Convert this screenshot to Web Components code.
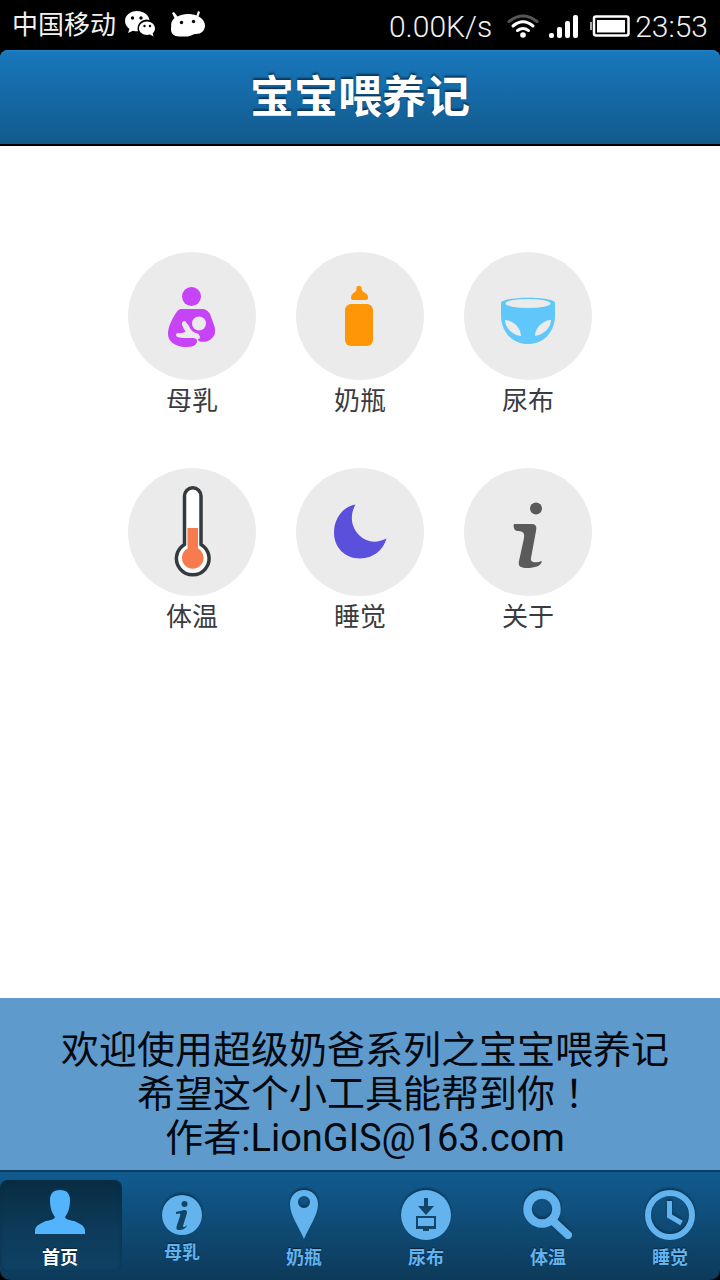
<!DOCTYPE html>
<html lang="zh-CN">
<head>
<meta charset="utf-8">
<meta name="viewport" content="width=device-width, initial-scale=1">
<title>宝宝喂养记</title>
<style>
  html { background: #000; }
  body { margin: 0; font-family: Roboto, "Noto Sans CJK SC", sans-serif; }
</style>
</head>
<body>
<feeding-app></feeding-app>

<script>
const ICONS = {
  wechat: ['0 0 32 30', `<path fill="#fff" d="M13 1C6 1 1 5.500 1 11c0 3.300 1.800 6 4.500 8L4 23l5-2.300c1.600.500 3.300.700 5 .500A9 9 0 0 1 25.500 10C24.500 4.500 19.500 1 13 1z"/><circle cx="8.500" cy="8" r="1.700"/><circle cx="17" cy="8" r="1.700"/><path fill="#fff" d="M23 11.500c-4.500 0-8 3-8 6.800s3.500 6.700 8 6.700c1 0 2-.200 3-.500l3.500 2-.800-3.300c1.500-1.200 2.300-3 2.300-4.900 0-3.800-3.500-6.800-8-6.800z"/><circle cx="20.500" cy="16" r="1.200"/><circle cx="26" cy="16" r="1.200"/>`],
  droid: ['0 0 36 30', `<path fill="#fff" d="M2 3l2-1 3.500 4.500c3-1.500 6-2.500 10.500-2.500 3 0 6 .500 8.500 1.500L28 1l2 1-1.500 4.500C32.500 8.500 35 12 35 15.500c0 5-4 8.500-9 8.500-3 0-4 1.500-8 2.500H9c-5 0-8-3-8-7 0-2 .200-3 .200-5C1.200 12 2.500 10 4.500 8z"/><circle cx="11.500" cy="12.500" r="1.700"/><circle cx="23.500" cy="11.500" r="1.700"/>`],
  wifi: ['0 0 32 26', `<g fill="none" stroke="#fff" stroke-linecap="round"><path stroke="#555" stroke-width="3" d="M2 8.500Q16-2.500 30 8.500"/><path stroke-width="3" d="M6 13Q16 4.500 26 13"/><path stroke-width="3" d="M10.500 17.500Q16 13.500 21.500 17.500"/></g><circle cx="16" cy="22" r="2.800" fill="#fff"/>`],
  signal: ['0 0 30 24', `<g fill="#fff"><rect x="0" y="18" width="5" height="5" rx="2"/><rect x="8" y="12" width="5" height="11" rx="2"/><rect x="16" y="6" width="5" height="17" rx="2"/><rect x="24" y="0" width="5" height="23" rx="2"/></g>`],
  battery: ['0 0 40 22', `<rect x="0" y="7" width="2" height="8" fill="#aaa"/><rect x="4" y="1.500" width="34.500" height="19" rx="2" fill="none" stroke="#fff" stroke-width="2.500"/><rect x="7" y="5" width="28" height="12.500" fill="#fff"/>`],

  nursing: ['0 0 128 128', `<circle cx="63.500" cy="44.500" r="9.500" fill="#c643f6"/><path fill="#c643f6" d="M53 57h21c4 0 6 2 8 5l4 11c3 8 0 13-6 16-4 1.500-9 1-10-1-1-3 0-5 1-6-5-1-8-3-10-8l-4-5c-2 0-3 1-3 3l4 8c-3 1-7 1-9 4 2 2 6 2 10 2h6c4 0 5 3 3 6-2 3-8 3-12 3-10-1-16-6-16-13 0-7 4-15 8-21 2-3 3-4 5-4z"/><circle cx="71" cy="71.500" r="7" fill="#ebebeb"/><path d="M56 72q2 9 14 13M50 83q7 1 11-3" fill="none" stroke="#ebebeb" stroke-width="4" stroke-linecap="round"/>`],
  bottle: ['0 0 128 128', `<g fill="#ff9608"><path d="M60.500 36c0-3 5-3 5 0 0 4 3 4 5 6 2 2 2 6 0 6h-14c-2 0-2-4 0-6 2-2 4-2 4-6z"/><rect x="49" y="52" width="28" height="42" rx="6"/></g>`],
  diaper: ['0 0 128 128', `<path d="M37 51c0-7 54-7 54 0v14c-1 17-13 27-27 27S38 82 37 65z" fill="#60c7fa"/><ellipse cx="64" cy="51.500" rx="22.500" ry="4.500" fill="#ebebeb"/><path d="M41 68c7 0 16 7 16 16-8-1-16-8-16-16zM87 68c-7 0-16 7-16 16 8-1 16-8 16-16z" fill="#ebebeb"/>`],
  thermometer: ['0 0 128 128', `<path d="M56.500 28a8.250 8.250 0 0 1 16.500 0v48.500a16.300 16.300 0 1 1-16.500 0z" fill="#fff" stroke="#343a3e" stroke-width="3.500"/><path d="M59.500 60h10.500v20.500a10.800 10.800 0 1 1-10.500 0z" fill="#f77b4e"/>`],
  moon: ['0 0 128 128', `<path d="M59.500 36.500c-7 13-3 24 4 31 7 7 17 8 27 3-3 11-13 20-26.500 20-15 0-26-11-26-26 0-14 9-26 21.500-28z" fill="#5b50dc"/>`],
  about: ['0 0 128 128', `<circle cx="72" cy="40.500" r="6" fill="#5a5a5a"/><path d="M50 56h18c4 0 5 3 4 7l-5 27c-1 5 5 5 11 3-1 5-7 7-15 7-7 0-9-2-8-7l5-23c1-6-2-7-7-7-3-1-4-4-3-7z" fill="#5a5a5a"/>`],

  home: ['0 0 50 50', `<path fill="currentColor" d="M25 0c-7 0-10 4-10 10 0 8 2 13 5 17-1 3-5 3-9 4-7 3-11 5-11 10v3h50v-3c0-5-4-7-11-10-4-1-8-1-9-4 3-4 5-9 5-17 0-6-3-10-10-10z"/>`],
  info: ['0 0 40 40', `<circle cx="20" cy="20" r="20" fill="currentColor"/><g fill="#124668"><circle cx="22.500" cy="9" r="3"/><path d="M14 17l8-2c3 0 3 1 3 3l-4 13c0 2 2 1 4-1-1 4-5 5-8 5-3 0-3-2-2-5l3-9c1-3 0-3-4-2z"/></g>`],
  pin: ['0 0 50 50', `<path fill="currentColor" fill-rule="evenodd" d="M25 0c8 0 14 6 14 14 0 11-8 21-14 35-6-14-14-24-14-35C11 6 17 0 25 0zm0 6a6 6 0 1 0 0 12 6 6 0 0 0 0-12z"/>`],
  download: ['0 0 50 50', `<circle cx="25" cy="25" r="25" fill="currentColor"/><path fill="#124668" fill-rule="evenodd" d="M23 8h4v8h6l-8 9-8-9h6zM15 26h20v13h-7v2h-6v-2h-7zM17 28v8h16v-8z"/>`],
  search: ['0 0 50 50', `<g fill="none" stroke="currentColor"><circle cx="19" cy="19" r="14.500" stroke-width="8.500"/><path d="M30 31L45 45" stroke-width="8" stroke-linecap="round"/></g>`],
  clock: ['0 0 50 50', `<g fill="none" stroke="currentColor"><circle cx="25" cy="25" r="22" stroke-width="6"/><path d="M24.500 11v15l12 7" stroke-width="5"/></g>`]
};

function mount(host, html) {
  const template = document.createElement('template');
  template.innerHTML = html;
  host.attachShadow({ mode: 'open' }).append(template.content.cloneNode(true));
}

customElements.define('app-icon', class extends HTMLElement {
  connectedCallback() {
    if (this.shadowRoot) return;
    const [box, shapes] = ICONS[this.getAttribute('name')];
    mount(this, `<style>
      :host { display: block; flex: none; }
      svg { display: block; width: 100%; height: 100%; overflow: visible; }
    </style><svg viewBox="${box}" aria-hidden="true">${shapes}</svg>`);
  }
});

customElements.define('status-bar', class extends HTMLElement {
  connectedCallback() {
    if (this.shadowRoot) return;
    mount(this, `<style>
      :host { display: flex; justify-content: space-between; align-items: center; height: 50px;
        padding: 0 12px; background: #000; color: #f2f2f2; line-height: 36px; }
      div { display: flex; align-items: center; }
      .carrier { font-size: 26px; margin-right: 8px; }
      .num { font-size: 30px; font-weight: 300; padding-top: 4px; }
      .wechat { width: 32px; height: 30px; margin-right: 14px; }
      .droid { width: 36px; height: 30px; }
      .wifi { width: 32px; height: 26px; margin: 2px 10px 0 15px; }
      .signal { width: 30px; height: 24px; margin: 4px 11px 0 0; }
      .battery { width: 40px; height: 22px; margin: 2px 5px 0 0; }
    </style>
    <div><span class="carrier">中国移动</span><app-icon class="wechat" name="wechat"></app-icon><app-icon class="droid" name="droid"></app-icon></div>
    <div><span class="num">0.00K/s</span><app-icon class="wifi" name="wifi"></app-icon><app-icon class="signal" name="signal"></app-icon><app-icon class="battery" name="battery"></app-icon><span class="num">23:53</span></div>`);
  }
});

customElements.define('app-header', class extends HTMLElement {
  connectedCallback() {
    if (this.shadowRoot) return;
    mount(this, `<style>
      :host { display: block; background: #000; }
      header { border-radius: 8px 8px 0 0; border-bottom: 2px solid #000; padding: 16px 0 14px;
        background: linear-gradient(#1878bd, #125a8c); box-shadow: inset 0 2px #1b7fc6; }
      h1 { margin: 0; font-size: 44px; line-height: 64px; font-weight: 700; text-align: center;
        color: #fff; text-shadow: 0 -2px 2px #0b3557; }
    </style><header><h1><slot></slot></h1></header>`);
  }
});

customElements.define('menu-tile', class extends HTMLElement {
  connectedCallback() {
    if (this.shadowRoot) return;
    mount(this, `<style>
      :host { display: block; }
      a { display: block; text-decoration: none; color: #393b40; text-align: center;
        font-size: 26px; line-height: 34px; }
      app-icon { width: 128px; height: 128px; margin-bottom: 4px; border-radius: 50%; background: #ebebeb; }
    </style><a href="#${this.getAttribute('icon')}"><app-icon name="${this.getAttribute('icon')}"></app-icon><slot></slot></a>`);
  }
});

customElements.define('menu-grid', class extends HTMLElement {
  connectedCallback() {
    if (this.shadowRoot) return;
    mount(this, `<style>
      :host { display: grid; grid-template-columns: repeat(3, 128px); justify-content: center;
        gap: 50px 40px; }
    </style><slot></slot>`);
  }
});

customElements.define('welcome-note', class extends HTMLElement {
  connectedCallback() {
    if (this.shadowRoot) return;
    mount(this, `<style>
      :host { display: block; padding: 30px 0 10px 10px; background: #5f9acc; color: #04080f;
        font-size: 38px; line-height: 44px; text-align: center; }
      ::slotted(span) { font-family: Roboto, "Noto Sans CJK TC", sans-serif; }
    </style><slot></slot>`);
  }
});

customElements.define('tab-item', class extends HTMLElement {
  connectedCallback() {
    if (this.shadowRoot) return;
    const icon = this.getAttribute('icon');
    mount(this, `<style>
      :host { display: block; flex: none; width: calc((100% + 12px) / 6); }
      a { display: flex; flex-direction: column; align-items: center; justify-content: center;
        box-sizing: border-box; height: 92px; padding: 6px 2px 0 0; gap: 8px; border-radius: 8px;
        text-decoration: none; color: #63b3ee; font-size: 18px; line-height: 20px; font-weight: 700;
        text-shadow: 0 -1px 1px #062338; }
      app-icon { width: 50px; height: 50px; filter: drop-shadow(0 -2px 1px #0a3554); }
      app-icon[name=info] { width: 40px; height: 40px; }
      :host([active]) a { color: #fff; background: linear-gradient(#082c42, #0d3a58 50%, #0f4265);
        box-shadow: inset 0 0 4px #0a3049; }
      :host([active]) app-icon { color: #53b4fd; }
    </style><a href="#tab-${icon}"><app-icon name="${icon}"></app-icon><span><slot></slot></span></a>`);
  }
});

customElements.define('tab-bar', class extends HTMLElement {
  connectedCallback() {
    if (this.shadowRoot) return;
    mount(this, `<style>
      :host { display: block; background: #000; }
      nav { display: flex; overflow: hidden; padding: 8px 0; border-top: 2px solid #0c3e63;
        border-radius: 0 0 10px 10px; background: linear-gradient(#115b90, #0d3a5a); }
    </style><nav><slot></slot></nav>`);
  }
});

customElements.define('feeding-app', class extends HTMLElement {
  connectedCallback() {
    if (this.shadowRoot) return;
    mount(this, `<style>
      :host { display: flex; flex-direction: column; min-height: 100vh; }
      main { flex: 1; padding: 106px 0 40px; background: #fff; }
    </style>
    <status-bar></status-bar>
    <app-header>宝宝喂养记</app-header>
    <main>
      <menu-grid>
        <menu-tile icon="nursing">母乳</menu-tile>
        <menu-tile icon="bottle">奶瓶</menu-tile>
        <menu-tile icon="diaper">尿布</menu-tile>
        <menu-tile icon="thermometer">体温</menu-tile>
        <menu-tile icon="moon">睡觉</menu-tile>
        <menu-tile icon="about">关于</menu-tile>
      </menu-grid>
    </main>
    <welcome-note>欢迎使用超级奶爸系列之宝宝喂养记<br>希望这个小工具能帮到你<span lang="zh-TW">！</span><br>作者:LionGIS@163.com</welcome-note>
    <tab-bar>
      <tab-item icon="home" active>首页</tab-item>
      <tab-item icon="info">母乳</tab-item>
      <tab-item icon="pin">奶瓶</tab-item>
      <tab-item icon="download">尿布</tab-item>
      <tab-item icon="search">体温</tab-item>
      <tab-item icon="clock">睡觉</tab-item>
    </tab-bar>`);
  }
});
</script>
</body>
</html>
